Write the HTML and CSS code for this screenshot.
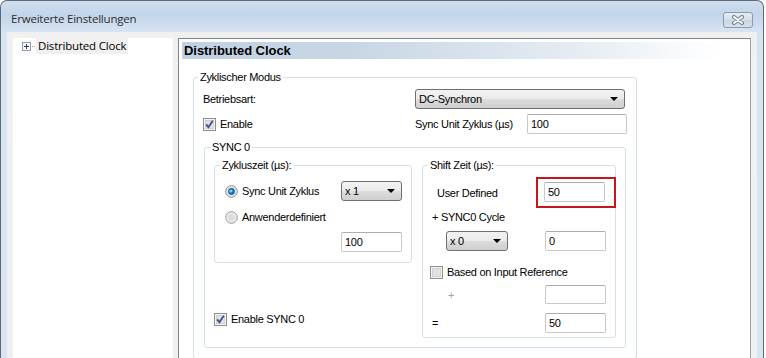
FILE: index.html
```html
<!DOCTYPE html>
<html lang="de">
<head>
    <meta charset="UTF-8">
    <title>Erweiterte Einstellungen</title>
    <link rel="stylesheet" href="styles.css">
</head>
<body>
    <div class="window">
        <div class="titlebar">
            <span class="title">Erweiterte Einstellungen</span>
            <span class="close-btn">
                <svg width="14" height="10" viewBox="0 0 14 10">
                    <path d="M3 2 L11 8 M11 2 L3 8" stroke="#6f7b8b" stroke-width="4" stroke-linecap="round"/>
                    <path d="M3 2 L11 8 M11 2 L3 8" stroke="#ffffff" stroke-width="2" stroke-linecap="round"/>
                </svg>
            </span>
        </div>

        <div class="client">
            <div class="tree">
                <div class="tree-item">
                    <svg class="expander" width="9" height="9" viewBox="0 0 9 9">
                        <rect x="0.5" y="0.5" width="8" height="8" fill="#f7f7f7" stroke="#8f9bb0"/>
                        <path d="M2 4.5 H7 M4.5 2 V7" stroke="#2b3b6a"/>
                    </svg>
                    <span class="tree-dots"></span>
                    <span class="tree-label">Distributed Clock</span>
                </div>
            </div>

            <div class="panel">
                <div class="panel-head">Distributed Clock</div>

                <fieldset class="group mode">
                    <legend>Zyklischer Modus</legend>
                    <div class="row">
                        <span class="label-col">Betriebsart:</span>
                        <span class="combo w210"><span>DC-Synchron</span><span class="arrow"></span></span>
                    </div>
                    <div class="row gap5">
                        <span class="label-col">
                            <svg class="cb" width="13" height="13" viewBox="0 0 13 13">
                                <rect x="0.5" y="0.5" width="12" height="12" fill="#f4f4f4" stroke="#8e8f8f"/>
                                <rect x="2.5" y="2.5" width="8" height="8" fill="#e2e2e2" stroke="#d0d0d0"/>
                                <path d="M3.2 6.4 L5.4 9.2 L9.8 2.8" fill="none" stroke="#3d4f8c" stroke-width="1.8"/>
                            </svg>
                            Enable
                        </span>
                        <span class="unit-label">Sync Unit Zyklus (µs)</span>
                        <span class="txt w100">100</span>
                    </div>

                    <fieldset class="group sync">
                        <legend>SYNC 0</legend>
                        <div class="sync-cols">
                            <div class="sync-left">
                                <fieldset class="group cycle">
                                    <legend>Zykluszeit (µs):</legend>
                                    <div class="row between">
                                        <span class="radio-label">
                                            <svg class="rb" width="13" height="13" viewBox="0 0 13 13">
                                                <circle cx="6.5" cy="6.5" r="5.8" fill="#e9e9e9" stroke="#8a8a8a"/>
                                                <circle cx="6.5" cy="6.5" r="3.4" fill="#1f6aa8"/>
                                                <circle cx="6" cy="6" r="1.6" fill="#7fd3f7"/>
                                            </svg>
                                            Sync Unit Zyklus
                                        </span>
                                        <span class="combo w61"><span>x 1</span><span class="arrow"></span></span>
                                    </div>
                                    <div class="row gap6">
                                        <span class="radio-label">
                                            <svg class="rb" width="13" height="13" viewBox="0 0 13 13">
                                                <circle cx="6.5" cy="6.5" r="5.8" fill="#ececec" stroke="#9a9a9a"/>
                                                <circle cx="6.5" cy="6.5" r="3.6" fill="#dcdcdc"/>
                                            </svg>
                                            Anwenderdefiniert
                                        </span>
                                    </div>
                                    <div class="row gap5 end">
                                        <span class="txt w61">100</span>
                                    </div>
                                </fieldset>
                                <div class="check-row enable-sync">
                                    <svg class="cb" width="13" height="13" viewBox="0 0 13 13">
                                        <rect x="0.5" y="0.5" width="12" height="12" fill="#f4f4f4" stroke="#8e8f8f"/>
                                        <rect x="2.5" y="2.5" width="8" height="8" fill="#e2e2e2" stroke="#d0d0d0"/>
                                        <path d="M3.2 6.4 L5.4 9.2 L9.8 2.8" fill="none" stroke="#3d4f8c" stroke-width="1.8"/>
                                    </svg>
                                    Enable SYNC 0
                                </div>
                            </div>

                            <fieldset class="group shift">
                                <legend>Shift Zeit (µs):</legend>
                                <div class="row between tall">
                                    <span class="indent7">User Defined</span>
                                    <span class="marked"><span class="txt w61">50</span></span>
                                </div>
                                <div class="line indent2">+ SYNC0 Cycle</div>
                                <div class="row between gap6">
                                    <span class="combo w62 indent16"><span>x 0</span><span class="arrow"></span></span>
                                    <span class="txt w61">0</span>
                                </div>
                                <div class="check-row gap13">
                                    <svg class="cb" width="13" height="13" viewBox="0 0 13 13">
                                        <rect x="0.5" y="0.5" width="12" height="12" fill="#f4f4f4" stroke="#8e8f8f"/>
                                        <rect x="2.5" y="2.5" width="8" height="8" fill="#e2e2e2" stroke="#d0d0d0"/>
                                    </svg>
                                    Based on Input Reference
                                </div>
                                <div class="row between gap5 h19">
                                    <span class="muted indent18">+</span>
                                    <span class="txt w61 h19"></span>
                                </div>
                                <div class="row between gap10">
                                    <span class="indent2">=</span>
                                    <span class="txt w61">50</span>
                                </div>
                            </fieldset>
                        </div>
                    </fieldset>
                </fieldset>
            </div>
        </div>
    </div>
</body>
</html>
```

FILE: styles.css
```css
body {
    margin: 0;
    background: #ffffff;
    overflow: hidden;
    font-family: "Liberation Sans", Arial, sans-serif;
    font-size: 11px;
    letter-spacing: -0.3px;
    color: #000;
}

.window {
    width: 764px;
    height: 400px;
    box-sizing: border-box;
    border: 1px solid #5f6b7a;
    border-bottom: none;
    border-radius: 7px 7px 0 0;
    background: linear-gradient(#cfdeee 0px, #c3d5ea 14px, #d7e4f2 31px, #d9e5f2 100%);
}

.titlebar {
    height: 30px;
    display: flex;
    justify-content: space-between;
    align-items: flex-start;
    padding: 0 10px 0 10px;
}

.title {
    font-family: "Open Sans", "Noto Sans", sans-serif;
    font-size: 11.5px;
    letter-spacing: -0.2px;
    line-height: 16px;
    margin-top: 10px;
    color: #2e2e2e;
}

.close-btn {
    width: 30px;
    height: 16px;
    margin-top: 11px;
    box-sizing: border-box;
    border: 1px solid #8d9aac;
    border-radius: 3px;
    background: linear-gradient(#e6edf5, #d3deea 50%, #c8d5e3 51%, #d6e1ec);
    display: flex;
    align-items: center;
    justify-content: center;
}

.client {
    margin: 1px 6px 0 6px;
    padding: 6px;
    background: #f0f0f0;
    display: flex;
    gap: 5px;
    height: 360px;
}

.tree {
    width: 160px;
    background: #ffffff;
}

.tree-item {
    display: flex;
    align-items: center;
    height: 16px;
}

.expander {
    margin-left: 9px;
}

.tree-dots {
    width: 4px;
    height: 1px;
    margin-left: 1px;
    background: repeating-linear-gradient(90deg, #a0a0a0 0 1px, transparent 1px 2px);
}

.tree-label {
    font-family: "Open Sans", "Noto Sans", sans-serif;
    font-size: 11.5px;
    letter-spacing: -0.2px;
    line-height: 16px;
    background: #f0f0f0;
    padding: 0 2px;
}

.panel {
    flex: 1;
    background: #ffffff;
    border: 1px solid #7f8690;
    border-right-color: #9aa0a8;
    padding: 3px;
}

.panel-head {
    height: 17px;
    line-height: 17px;
    font-weight: bold;
    font-size: 13px;
    letter-spacing: -0.05px;
    padding-left: 2px;
    background: linear-gradient(90deg, #c2d1e1 0%, #c8d6e4 30%, #e6ecf3 70%, #ffffff 95%);
}

fieldset.group {
    margin: 0;
    border: 1px solid #d5dfe5;
    border-radius: 3px;
    min-width: 0;
    box-sizing: border-box;
}

fieldset.group legend {
    padding: 0 2px;
    line-height: 12px;
}

.mode {
    width: 444px;
    margin: 12px 0 0 11px !important;
    padding: 6px 9px 10px 9px;
}

.mode legend {
    margin-left: -5px;
}

.sync {
    width: 422px;
    margin: 7px 0 0 1px !important;
    padding: 6px 9px 9px 9px;
}

.sync legend {
    margin-left: -4px;
}

.sync-cols {
    display: flex;
    gap: 10px;
}

.sync-left {
    display: flex;
    flex-direction: column;
    width: 198px;
}

.cycle {
    width: 198px;
    padding: 10px 9px 10px 10px;
}

.cycle legend {
    margin-left: -5px;
}

.shift {
    width: 194px;
    padding: 6px 9px 4px 7px;
}

.shift legend {
    margin-left: -2px;
}

.row {
    display: flex;
    align-items: center;
    height: 20px;
}

.row.between {
    justify-content: space-between;
}

.row.end {
    justify-content: flex-end;
}

.row.tall {
    height: auto;
}

.row.h19 {
    height: 19px;
}

.gap5 { margin-top: 5px; }
.gap6 { margin-top: 6px; }
.gap10 { margin-top: 9px; }
.gap13 { margin-top: 13px; }

.indent2 { margin-left: 2px; }
.indent7 { margin-left: 7px; }
.indent16 { margin-left: 16px; }
.indent18 { margin-left: 18px; }

.label-col {
    width: 212px;
    display: flex;
    align-items: center;
    gap: 4px;
}

.unit-label {
    flex: 1;
}

.radio-label {
    display: flex;
    align-items: center;
    gap: 4px;
}

.check-row {
    display: flex;
    align-items: center;
    gap: 4px;
    height: 16px;
}

.enable-sync {
    margin-top: auto;
    margin-bottom: 11px;
}

.line {
    height: 16px;
    line-height: 16px;
    margin-top: 1px;
}

.muted {
    color: #a0a0a0;
}

.combo {
    display: flex;
    justify-content: space-between;
    align-items: center;
    height: 20px;
    box-sizing: border-box;
    padding: 0 6px 0 3px;
    border: 1px solid #707070;
    border-radius: 3px;
    background: linear-gradient(#f2f2f2 0%, #ebebeb 50%, #dddddd 51%, #cfcfcf 100%);
}

.arrow {
    width: 0;
    height: 0;
    border-left: 4px solid transparent;
    border-right: 4px solid transparent;
    border-top: 4px solid #000;
}

.w210 { width: 210px; }
.w100 { width: 100px; }
.w61 { width: 61px; }
.w62 { width: 62px; }

.txt {
    display: flex;
    align-items: center;
    height: 20px;
    box-sizing: border-box;
    padding: 0 3px;
    border: 1px solid #c5c8cd;
    border-top-color: #abadb3;
    border-radius: 2px;
    background: #ffffff;
}

.txt.h19 {
    height: 19px;
}

.marked {
    display: flex;
    border: 2px solid #c4161c;
    padding: 3px 9px 4px 6px;
    margin-right: -10px;
}
```
